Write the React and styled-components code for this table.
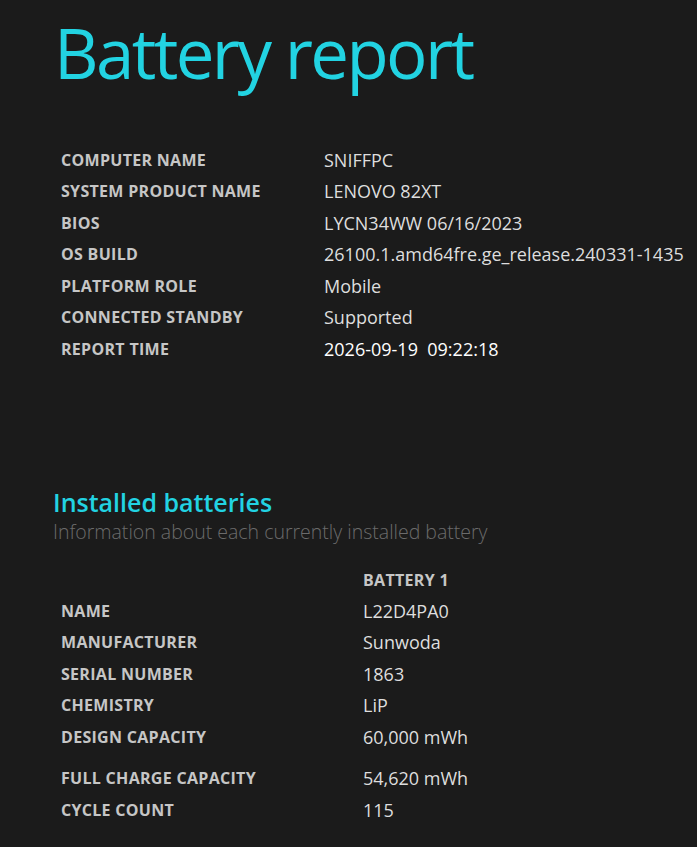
import React from 'react'
import styled, { createGlobalStyle } from 'styled-components'

const GlobalStyle = createGlobalStyle`
  html, body {
    margin: 0;
    padding: 0;
    background: #1b1b1b;
  }
  body {
    font-family: "Open Sans", "Noto Sans", sans-serif;
    color: #e2e2e2;
  }
`

const Page = styled.div`
  min-height: 847px;
  padding: 8px 0 0 55px;
  box-sizing: border-box;
`

const Title = styled.h1`
  margin: 0 0 0 -1px;
  font-size: 69px;
  font-weight: 400;
  line-height: 88px;
  color: #22d3e2;
  letter-spacing: -2.6px;
`

const InfoTable = styled.div`
  padding-left: 6px;
  margin-top: ${props => props.top || 0}px;
`

const Row = styled.div`
  display: grid;
  grid-template-columns: ${props => props.labelWidth}px 1fr;
  align-items: center;
  height: ${props => props.short ? 29.5 : 31.5}px;
  margin-top: ${props => props.gap || 0}px;
`

const Label = styled.div`
  font-size: 16px;
  font-weight: 700;
  color: #c6c6c6;
  letter-spacing: 0.3px;
  text-transform: uppercase;
  white-space: nowrap;
`

const Value = styled.div`
  font-size: 18px;
  font-weight: ${props => props.bright ? 500 : 400};
  color: ${props => props.bright ? '#ffffff' : '#dedede'};
  white-space: nowrap;
`

const SectionTitle = styled.h2`
  margin: 120px 0 0 -2px;
  font-size: 25px;
  font-weight: 600;
  line-height: 34px;
  color: #22d3e2;
`

const SectionSub = styled.div`
  margin-left: -2px;
  font-size: 19.5px;
  font-weight: 300;
  color: #6b6b6b;
  line-height: 26px;
`

const systemInfo = [
  ['Computer name', 'SNIFFPC'],
  ['System product name', 'LENOVO 82XT'],
  ['BIOS', 'LYCN34WW 06/16/2023'],
  ['OS build', '26100.1.amd64fre.ge_release.240331-1435'],
  ['Platform role', 'Mobile'],
  ['Connected standby', 'Supported'],
  ['Report time', '2026-09-19\u00a0\u00a009:22:18', true],
]

const batteryInfo = [
  ['Name', 'L22D4PA0'],
  ['Manufacturer', 'Sunwoda'],
  ['Serial number', '1863'],
  ['Chemistry', 'LiP'],
  ['Design capacity', '60,000 mWh'],
  ['Full charge capacity', '54,620 mWh', 10],
  ['Cycle count', '115'],
]

const App = () => (
  <>
    <GlobalStyle />
    <Page>
      <Title>Battery report</Title>
      <InfoTable top={48}>
        {systemInfo.map(([label, value, bright]) => (
          <Row key={label} labelWidth={263}>
            <Label>{label}</Label>
            <Value bright={bright}>{value}</Value>
          </Row>
        ))}
      </InfoTable>

      <SectionTitle>Installed batteries</SectionTitle>
      <SectionSub>Information about each currently installed battery</SectionSub>

      <InfoTable top={21}>
        <Row labelWidth={302} short>
          <div />
          <Label>Battery 1</Label>
        </Row>
        {batteryInfo.map(([label, value, gap]) => (
          <Row key={label} labelWidth={302} gap={gap}>
            <Label>{label}</Label>
            <Value>{value}</Value>
          </Row>
        ))}
      </InfoTable>
    </Page>
  </>
)

export default App
